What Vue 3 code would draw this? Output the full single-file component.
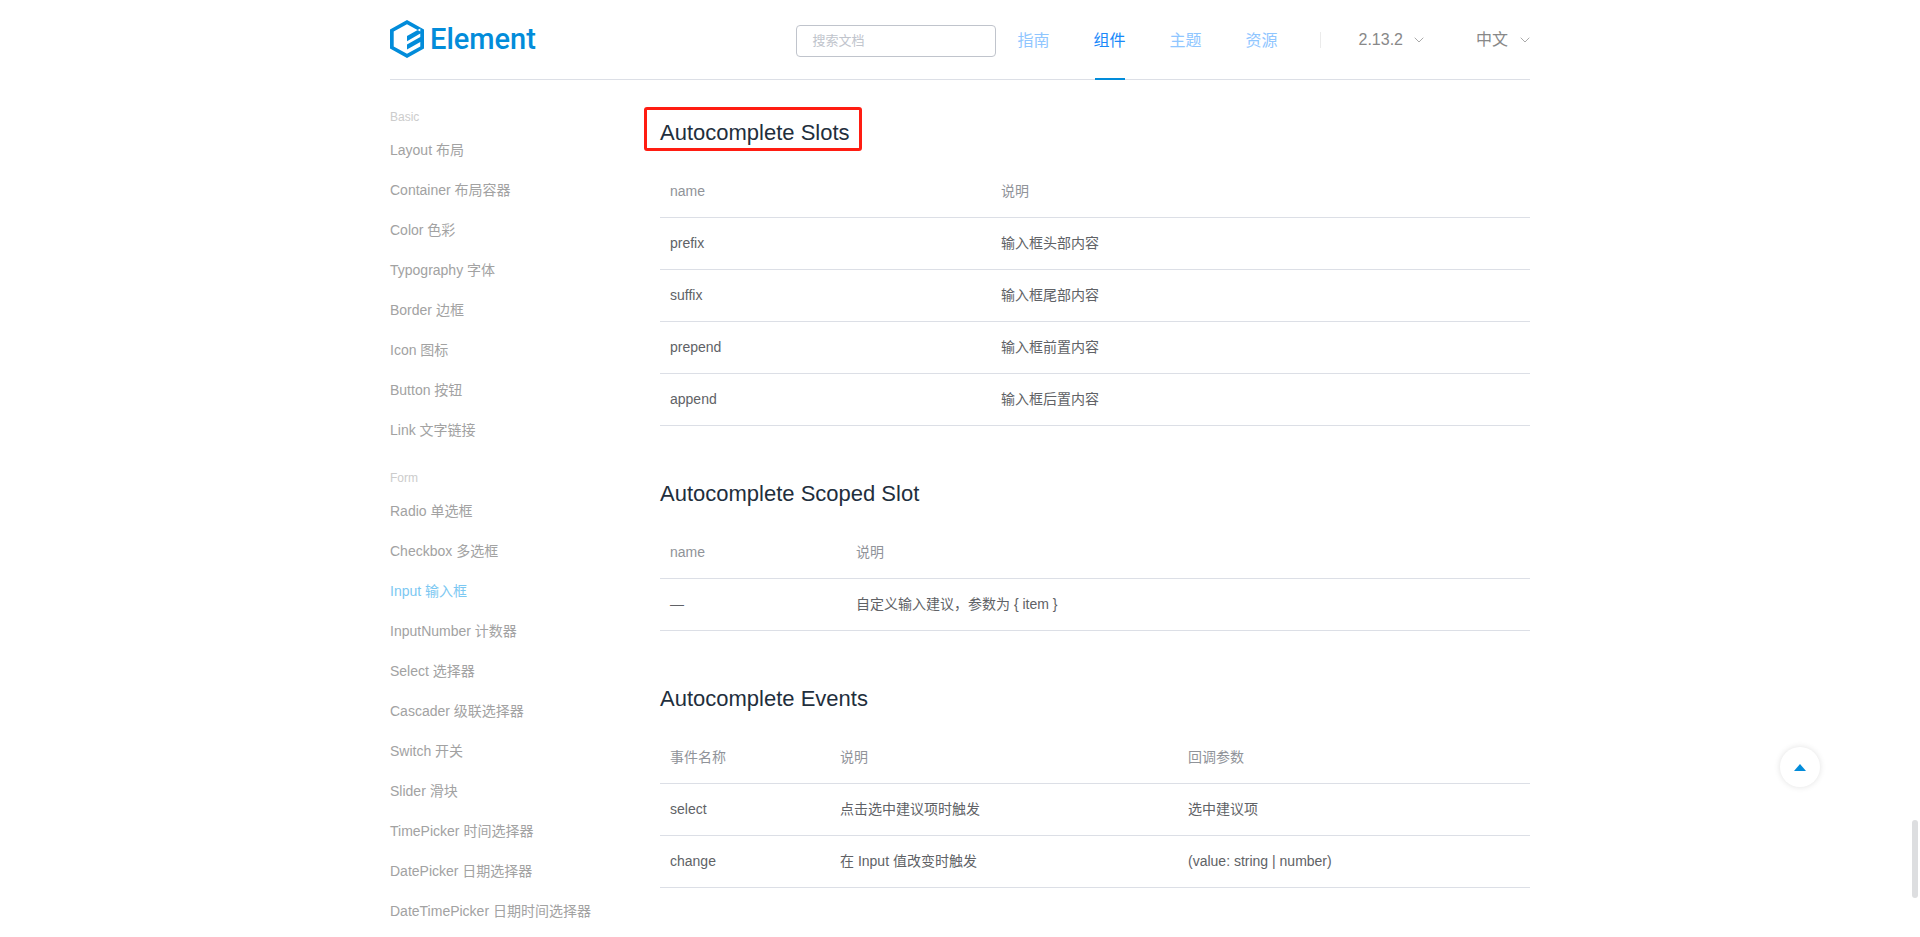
<script setup>
import { ref } from 'vue'

const keyword = ref('')

const navItems = [
  { label: '指南' },
  { label: '组件', active: true },
  { label: '主题' },
  { label: '资源' }
]

const groups = [
  {
    title: 'Basic',
    items: [
      'Layout 布局',
      'Container 布局容器',
      'Color 色彩',
      'Typography 字体',
      'Border 边框',
      'Icon 图标',
      'Button 按钮',
      'Link 文字链接'
    ]
  },
  {
    title: 'Form',
    items: [
      'Radio 单选框',
      'Checkbox 多选框',
      'Input 输入框',
      'InputNumber 计数器',
      'Select 选择器',
      'Cascader 级联选择器',
      'Switch 开关',
      'Slider 滑块',
      'TimePicker 时间选择器',
      'DatePicker 日期选择器',
      'DateTimePicker 日期时间选择器'
    ]
  }
]
const current = 'Input 输入框'

const sections = [
  {
    id: 'slots',
    title: 'Autocomplete Slots',
    marked: true,
    head: ['name', '说明'],
    rows: [
      ['prefix', '输入框头部内容'],
      ['suffix', '输入框尾部内容'],
      ['prepend', '输入框前置内容'],
      ['append', '输入框后置内容']
    ]
  },
  {
    id: 'scoped-slot',
    title: 'Autocomplete Scoped Slot',
    head: ['name', '说明'],
    rows: [['—', '自定义输入建议，参数为 { item }']]
  },
  {
    id: 'events',
    title: 'Autocomplete Events',
    head: ['事件名称', '说明', '回调参数'],
    rows: [
      ['select', '点击选中建议项时触发', '选中建议项'],
      ['change', '在 Input 值改变时触发', '(value: string | number)']
    ]
  }
]
</script>

<template>
  <div class="page">
    <header class="header">
      <a class="logo" href="#" aria-label="Element">
        <svg class="logo-mark" width="34" height="38" viewBox="0 0 34 38" aria-hidden="true">
          <path
            fill="#028cda"
            fill-rule="evenodd"
            d="M17 0 34 9.5V28.5L17 38 0 28.5V9.5ZM17 4.2 3.7 11.6V26.4L17 33.8 30.3 26.4V22L17 29.6V24.6L30.3 17V13.6L17 21.2V16L30.3 8.4V11.6Z"
          />
        </svg>
        <span class="logo-text">Element</span>
      </a>
      <input v-model="keyword" class="search" type="text" placeholder="搜索文档" aria-label="搜索文档" />
      <nav class="nav">
        <a v-for="n in navItems" :key="n.label" href="#" class="nav-link" :class="{ active: n.active }">{{ n.label }}</a>
      </nav>
      <span class="divider"></span>
      <button type="button" class="picker version">
        2.13.2
        <svg width="10" height="6" viewBox="0 0 10 6" aria-hidden="true"><path d="M.7.7 5 5 9.3.7" /></svg>
      </button>
      <button type="button" class="picker lang">
        中文
        <svg width="10" height="6" viewBox="0 0 10 6" aria-hidden="true"><path d="M.7.7 5 5 9.3.7" /></svg>
      </button>
    </header>

    <div class="body">
      <aside class="side">
        <div v-for="g in groups" :key="g.title" class="group">
          <div class="group-title">{{ g.title }}</div>
          <a
            v-for="item in g.items"
            :key="item"
            href="#"
            class="side-link"
            :class="{ current: item === current }"
          >{{ item }}</a>
        </div>
      </aside>

      <main class="content">
        <section v-for="s in sections" :key="s.id" class="section">
          <h3 :class="{ marked: s.marked }">{{ s.title }}</h3>
          <table :class="s.id">
            <thead>
              <tr>
                <th v-for="h in s.head" :key="h" scope="col">{{ h }}</th>
              </tr>
            </thead>
            <tbody>
              <tr v-for="row in s.rows" :key="row[0]">
                <td v-for="cell in row" :key="cell">{{ cell }}</td>
              </tr>
            </tbody>
          </table>
        </section>
      </main>
    </div>

    <button type="button" class="back-top" aria-label="回到顶部">
      <svg width="12" height="7" viewBox="0 0 12 7" aria-hidden="true"><path d="M6 0 12 7H0Z" fill="#028cda" /></svg>
    </button>
    <div class="scroll-thumb"></div>
  </div>
</template>

<style>
body {
  margin: 0;
  background: #fff;
}
</style>

<style scoped>
.page {
  height: 100vh;
  overflow: hidden;
  font-family: "Liberation Sans", "Noto Sans CJK SC", sans-serif;
  font-size: 14px;
  color: #606266;
}

a {
  text-decoration: none;
}

.header,
.body {
  max-width: 1140px;
  margin: 0 auto;
}

.header {
  box-sizing: border-box;
  height: 80px;
  padding-top: 3px;
  display: flex;
  align-items: center;
  border-bottom: 1px solid #dcdfe6;
}

.logo {
  display: flex;
  align-items: center;
  gap: 6px;
  margin-right: auto;
  margin-bottom: 5px;
  color: #028cda;
}

.logo-text {
  font: 500 29px/38px Roboto, sans-serif;
}

.search {
  box-sizing: border-box;
  width: 200px;
  height: 32px;
  padding: 0 15px 2px;
  border: 1px solid #c0c4cc;
  border-radius: 4px;
  background: #fff;
  color: #606266;
  font-family: inherit;
  font-size: 13px;
  outline: none;
}

.search::placeholder {
  color: #c0c4cc;
  opacity: 1;
}

.nav {
  display: flex;
  gap: 44px;
  margin-left: 21px;
  align-self: stretch;
}

.nav-link {
  position: relative;
  display: flex;
  align-items: center;
  padding-bottom: 5px;
  font-size: 16px;
  color: #8fc6ff;
}

.nav-link.active {
  color: #1989fa;
}

.nav-link.active::after {
  content: "";
  position: absolute;
  left: 2px;
  width: 30px;
  bottom: -1px;
  height: 2px;
  background: #028cda;
}

.divider {
  width: 1px;
  height: 16px;
  margin: 0 38px 3px 42px;
  background: #ebebeb;
}

.picker {
  display: flex;
  align-items: center;
  gap: 12px;
  padding: 0 0 3px;
  border: 0;
  background: none;
  font-family: inherit;
  font-size: 16px;
  line-height: 24px;
  color: #888;
}

.picker.version {
  gap: 11px;
}

.picker.lang {
  margin-left: 52px;
}

.picker path {
  fill: none;
  stroke: #aaa;
}

.body {
  display: flex;
}

.side {
  flex: none;
  width: 270px;
  padding-top: 24px;
}

.group + .group {
  margin-top: 15px;
}

.group-title {
  font-size: 12px;
  line-height: 26px;
  color: #ccc;
}

.side-link {
  display: block;
  line-height: 40px;
  color: #a2a2a2;
}

.side-link.current {
  color: #7cc8f2;
}

.content {
  flex: 1;
  padding-top: 40px;
}

.section + .section {
  margin-top: 55px;
}

h3 {
  width: fit-content;
  margin: 0 0 20px;
  font-size: 22px;
  line-height: 26px;
  font-weight: 400;
  color: #1f2f3d;
}

.marked {
  position: relative;
}

.marked::after {
  content: "";
  position: absolute;
  inset: -13px -12px -5px -16px;
  border: 3px solid #ff1d12;
  border-radius: 3px;
}

table {
  width: 100%;
  table-layout: fixed;
  border-collapse: separate;
  border-spacing: 0;
}

th,
td {
  box-sizing: border-box;
  height: 52px;
  padding: 0 10px;
  border-bottom: 1px solid #dcdfe6;
  text-align: left;
  font-weight: 400;
  line-height: 21px;
}

th {
  color: #909399;
}

.slots th:first-child {
  width: 331px;
}

.scoped-slot th:first-child {
  width: 186px;
}

.events th:first-child {
  width: 170px;
}

.events th:nth-child(2) {
  width: 348px;
}

.back-top {
  position: fixed;
  right: 100px;
  bottom: 150px;
  width: 40px;
  height: 40px;
  display: flex;
  align-items: center;
  justify-content: center;
  padding: 0;
  border: 0;
  border-radius: 50%;
  background: #fff;
  box-shadow: 0 0 6px rgba(0, 0, 0, 0.12);
}

.scroll-thumb {
  position: fixed;
  right: 2px;
  bottom: 39px;
  width: 6px;
  height: 78px;
  border-radius: 3px;
  background: #dddee0;
}
</style>
